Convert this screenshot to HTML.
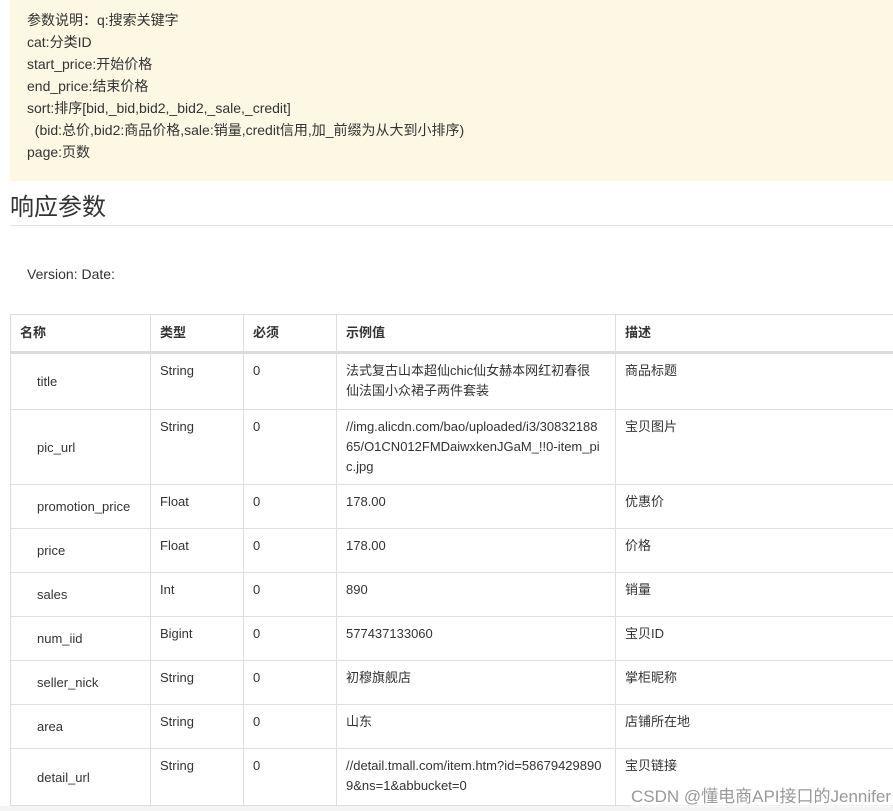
<!DOCTYPE html>
<html><head><meta charset="utf-8"><style>
body{margin:0;width:893px;height:811px;overflow:hidden;background:#fff;font-family:"Liberation Sans","Noto Sans CJK SC",sans-serif;color:#333;position:relative}
.box{position:absolute;left:10px;top:0;width:883px;height:181px;background:#fcf8e3;}
.box div{position:absolute;left:17px;font-size:14px;line-height:22px;color:#333}
h2{position:absolute;left:10px;top:193px;margin:0;font-size:24px;font-weight:normal;color:#333;line-height:30px}
.hr{position:absolute;left:10px;top:225px;width:883px;height:1px;background:#e5e5e5}
.ver{position:absolute;left:27px;top:266px;font-size:14px}
table{position:absolute;left:10px;top:314px;border-collapse:collapse;font-size:13px;color:#333;table-layout:fixed;width:1000px}
td,th{border:1px solid #dcdde6;vertical-align:top;padding:7px 9px 6px;line-height:20px;text-align:left}
th{height:19px;padding:8px 9px;font-weight:bold;border-bottom:3px solid #dcdcdc}
td.n{vertical-align:middle;padding-left:26px}
td.w{padding-right:15px;word-break:break-all}
.wm{position:absolute;right:2px;top:782px;font-size:17px;color:#999;background:rgba(255,255,255,.6)}
.foot{position:absolute;left:0;top:806px;width:893px;height:5px;background:#f4f4f4}
</style></head><body>
<div class="box">
<div style="top:9px">参数说明：q:搜索关键字</div>
<div style="top:31px">cat:分类ID</div>
<div style="top:53px">start_price:开始价格</div>
<div style="top:75px">end_price:结束价格</div>
<div style="top:97px">sort:排序[bid,_bid,bid2,_bid2,_sale,_credit]</div>
<div style="top:119px">&nbsp;&nbsp;(bid:总价,bid2:商品价格,sale:销量,credit信用,加_前缀为从大到小排序)</div>
<div style="top:141px">page:页数</div>
</div>
<h2>响应参数</h2>
<div class="hr"></div>
<div class="ver">Version: Date:</div>
<table>
<colgroup><col style="width:140px"><col style="width:93px"><col style="width:93px"><col style="width:279px"><col></colgroup>
<tr><th>名称</th><th>类型</th><th>必须</th><th>示例值</th><th>描述</th></tr>
<tr style="height:57px"><td class="n">title</td><td>String</td><td>0</td><td class="w">法式复古山本超仙chic仙女赫本网红初春很仙法国小众裙子两件套装</td><td>商品标题</td></tr>
<tr style="height:75px"><td class="n">pic_url</td><td>String</td><td>0</td><td class="w">//img.alicdn.com/bao/uploaded/i3/3083218865/O1CN012FMDaiwxkenJGaM_!!0-item_pic.jpg</td><td>宝贝图片</td></tr>
<tr style="height:44px"><td class="n">promotion_price</td><td>Float</td><td>0</td><td>178.00</td><td>优惠价</td></tr>
<tr style="height:44px"><td class="n">price</td><td>Float</td><td>0</td><td>178.00</td><td>价格</td></tr>
<tr style="height:44px"><td class="n">sales</td><td>Int</td><td>0</td><td>890</td><td>销量</td></tr>
<tr style="height:44px"><td class="n">num_iid</td><td>Bigint</td><td>0</td><td>577437133060</td><td>宝贝ID</td></tr>
<tr style="height:44px"><td class="n">seller_nick</td><td>String</td><td>0</td><td>初穆旗舰店</td><td>掌柜昵称</td></tr>
<tr style="height:44px"><td class="n">area</td><td>String</td><td>0</td><td>山东</td><td>店铺所在地</td></tr>
<tr style="height:57px"><td class="n">detail_url</td><td>String</td><td>0</td><td class="w" style="padding-right:11px">//detail.tmall.com/item.htm?id=586794298909&amp;ns=1&amp;abbucket=0</td><td>宝贝链接</td></tr>
</table>
<div class="foot"></div>
<div class="wm">CSDN @懂电商API接口的Jennifer</div>
</body></html>
